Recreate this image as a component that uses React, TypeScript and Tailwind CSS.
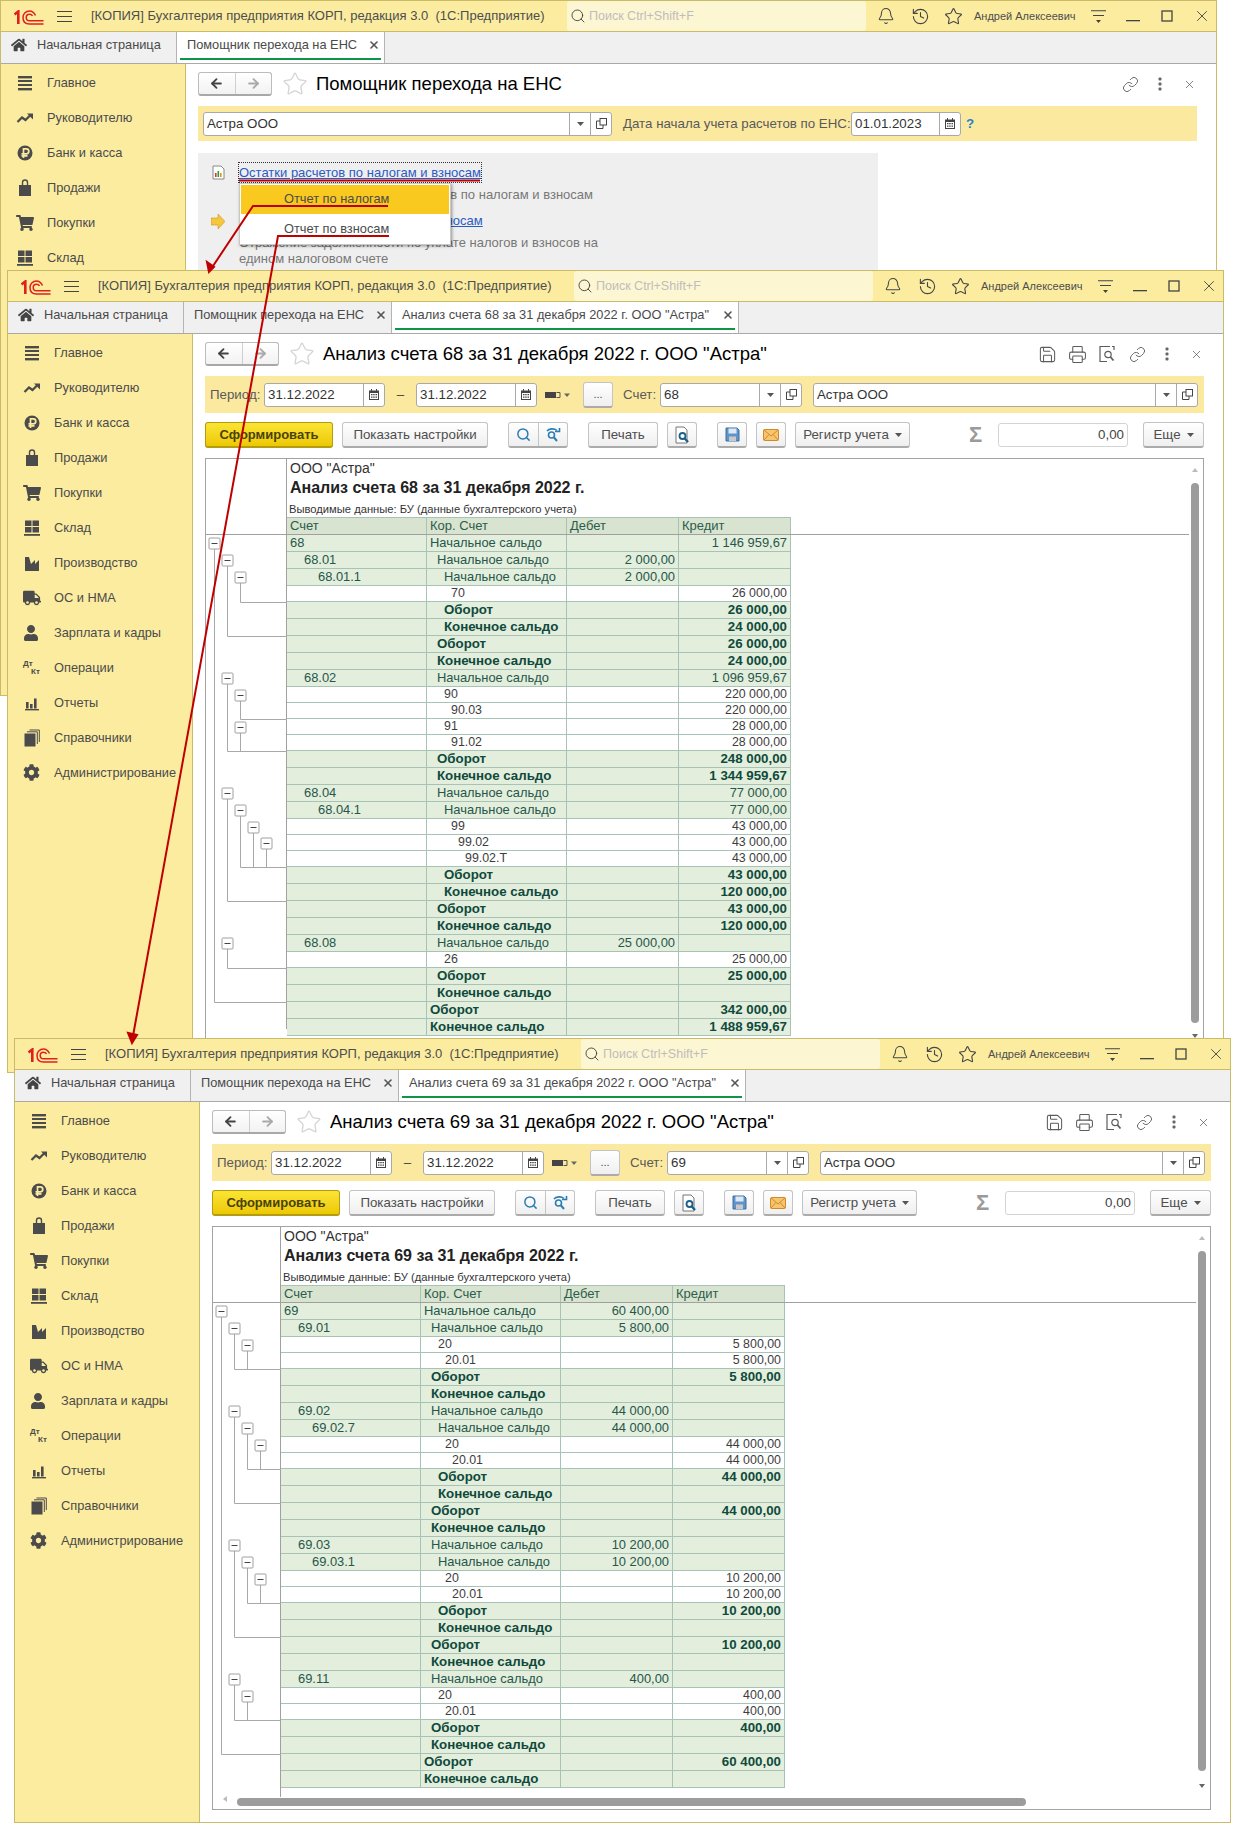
import React from 'react';
import { Bell, History, Star, Search, Link, Save, Printer, X, ArrowLeft, ArrowRight } from 'lucide-react';
import { FaHome, FaShoppingCart, FaTruck, FaUser, FaCog } from 'react-icons/fa';

const Logo = () => (
  <svg width="30" height="15" viewBox="0 0 30 15" fill="none" stroke="#e0201c">
    <path d="M0.5 4.5 L4.3 1.5 V14" strokeWidth="2.6" />
    <path d="M21.5 5.5C20 2.5 18 1 15.5 1C11.5 1 9 4 9 7.5C9 11.5 11.5 14 15.5 14H29.5" strokeWidth="1.5" />
    <path d="M18.5 6C18 5 17 4.2 15.5 4.2C13.5 4.2 12.2 5.6 12.2 7.5C12.2 9.4 13.5 10.8 15.5 10.8H29.5" strokeWidth="1.5" />
  </svg>
);

const Ic = ({ children }: { children: React.ReactNode }) => (
  <svg width="18" height="18" viewBox="0 0 18 18" fill="#4b4b4b">{children}</svg>
);

const navItems: [string, React.ReactNode][] = [
  ['Главное', <Ic><rect x="2" y="2" width="14" height="2.4" /><rect x="2" y="6" width="14" height="2" /><rect x="2" y="10" width="14" height="2" /><rect x="2" y="14" width="14" height="2.4" /></Ic>],
  ['Руководителю', <Ic><path d="M1.5 13 L6 8.5 L9.5 11 L14 6.5" fill="none" stroke="#4b4b4b" strokeWidth="2.2" /><path d="M11 4.5 H17 V10.5 Z" /></Ic>],
  ['Банк и касса', <Ic><circle cx="9" cy="9" r="7.5" /><path d="M7.5 14V4.8h2.8a2.5 2.5 0 0 1 0 5H5.5 M5.5 11.8h6" fill="none" stroke="#fbeca0" strokeWidth="1.7" /></Ic>],
  ['Продажи', <Ic><path d="M3 6 H15 V17 H3 Z" /><path d="M6.5 8 V3.5 A2.5 2.5 0 0 1 11.5 3.5 V8" fill="none" stroke="#4b4b4b" strokeWidth="1.4" /></Ic>],
  ['Покупки', <FaShoppingCart size={18} color="#4b4b4b" />],
  ['Склад', <Ic><rect x="2" y="1.5" width="6.5" height="5.5" /><rect x="9.5" y="1.5" width="6.5" height="5.5" /><rect x="2" y="8" width="6.5" height="5.5" /><rect x="9.5" y="8" width="6.5" height="5.5" /><rect x="1" y="15" width="16" height="1.8" /></Ic>],
  ['Производство', <Ic><path d="M2 17V3h4l2 7 4-4v4l4-4v11z" /></Ic>],
  ['ОС и НМА', <FaTruck size={18} color="#4b4b4b" />],
  ['Зарплата и кадры', <FaUser size={16} color="#4b4b4b" />],
  ['Операции', <span className="flex flex-col text-[8px] leading-[8px] font-bold text-[#4b4b4b]"><span>Дт</span><span className="pl-[8px]">Кт</span></span>],
  ['Отчеты', <Ic><rect x="3" y="8" width="2.6" height="6.5" /><rect x="7" y="10" width="2.6" height="4.5" /><rect x="11" y="4.5" width="2.6" height="10" /><rect x="2" y="15" width="14" height="1.4" /></Ic>],
  ['Справочники', <Ic><rect x="1.5" y="4.5" width="11" height="13" /><path d="M4 2.8 H14.3 V15 M6.5 1 H16.3 V13" fill="none" stroke="#4b4b4b" strokeWidth="1" /></Ic>],
  ['Администрирование', <FaCog size={17} color="#4b4b4b" />],
];

type Tab = { label: string; w: string; close?: boolean; active?: boolean; home?: boolean };

const SmallX = () => <X size={12} strokeWidth={3.2} color="#555" />;

function TabItem({ t }: { t: Tab }) {
  return (
    <div className={`${t.w} h-full flex flex-col border-r border-[#b4b4b4] ${t.active ? 'bg-white' : ''}`}>
      <div className={`flex-1 flex items-center ${t.home ? 'pl-[10px]' : 'pl-[10px] pr-[4px]'} text-[12.8px] text-[#4a4a4a] whitespace-nowrap overflow-hidden`}>
        {t.home && <FaHome size={16} color="#444" className="mr-[10px]" />}
        <span className="flex-1">{t.label}</span>
        {t.close && <span className="ml-[2px]"><SmallX /></span>}
      </div>
      <div className={`h-[2px] mx-[3px] mb-[3px] ${t.active ? 'bg-[#0d9448]' : ''}`} />
    </div>
  );
}

function Shell({ pos, tabs, overlay, nav = 13, children }: { pos: string; tabs: Tab[]; overlay?: React.ReactNode; nav?: number; children: React.ReactNode }) {
  return (
    <div className={`absolute ${pos} bg-white border border-[#cabb68] flex flex-col overflow-hidden`}>
      <div className="h-[31px] shrink-0 bg-[#fbeca0] border-b border-[#cabb68] flex items-center">
        <span className="ml-[13px] w-[30px] mt-[2px] flex"><Logo /></span>
        <svg className="ml-[13px]" width="15" height="13" viewBox="0 0 15 13" stroke="#444" strokeWidth="1.2"><path d="M0 1.5H15M0 6.5H15M0 11.5H15" /></svg>
        <span className="ml-[19px] w-[476px] text-[13px] text-[#4e4e4e] whitespace-pre">{'[КОПИЯ] Бухгалтерия предприятия КОРП, редакция 3.0  (1С:Предприятие)'}</span>
        <div className="w-[299px] h-[30px] bg-[#fdf6d2] rounded-[3px] flex items-center pl-[3px] text-[12.5px] text-[#bdbdbd]">
          <Search size={16} color="#444" strokeWidth={1.4} className="mr-[3px]" />
          <span>Поиск Ctrl+Shift+F</span>
        </div>
        <Bell className="ml-[11px]" size={18} color="#444" strokeWidth={1.4} />
        <History className="ml-[16px]" size={19} color="#444" strokeWidth={1.4} />
        <Star className="ml-[14px]" size={19} color="#444" strokeWidth={1.4} />
        <span className="ml-[11px] w-[117px] text-[11px] text-[#4e4e4e] whitespace-nowrap">Андрей Алексеевич</span>
        <svg width="15" height="15" viewBox="0 0 15 15" fill="#444"><path d="M0 1.2H15V2.2H0zM2 6H13V7H2zM5 11H10L7.5 14z" /></svg>
        <svg className="ml-[20px]" width="14" height="14" viewBox="0 0 14 14" fill="#444"><rect y="11" width="14" height="1.3" /></svg>
        <svg className="ml-[20px]" width="14" height="14" viewBox="0 0 14 14" fill="none" stroke="#444" strokeWidth="1.3"><rect x="2" y="2" width="10" height="10" /></svg>
        <X className="ml-[19px]" size={18} color="#444" strokeWidth={1.2} />
      </div>
      <div className="h-[32px] shrink-0 bg-[#f0f0f0] border-b border-[#a9a9a9] flex">
        {tabs.map((t) => <TabItem key={t.label} t={t} />)}
      </div>
      <div className="flex-1 flex min-h-0">
        <div className="w-[185px] shrink-0 bg-[#fbeca0] border-r border-[#cabb68] pt-[1px]">
          {navItems.slice(0, nav).map(([label, icon]) => (
            <div key={label} className="h-[35px] flex items-center text-[12.8px] text-[#4b4b4b]">
              <span className="w-[46px] pl-[15px] flex items-center">{icon}</span>
              <span>{label}</span>
            </div>
          ))}
        </div>
        <div className="flex-1 flex flex-col pl-[12px] pr-[19px] pt-[8px] min-w-0">{children}</div>
      </div>
      {overlay}
    </div>
  );
}

function TitleRow({ title, full }: { title: string; full?: boolean }) {
  return (
    <div className="h-[24px] shrink-0 flex items-center">
      <div className="w-[74px] h-[24px] flex border border-[#bcbcbc] border-b-2 border-b-[#a8a8a8] rounded-[3px] bg-gradient-to-b from-white to-[#f2f2f2]">
        <div className="flex-1 flex items-center justify-center border-r border-[#cfcfcf]"><ArrowLeft size={15} strokeWidth={3} color="#444" /></div>
        <div className="flex-1 flex items-center justify-center"><ArrowRight size={15} strokeWidth={3} color="#a9a9a9" /></div>
      </div>
      <Star className="ml-[10px]" size={26} color="#d4d4d4" strokeWidth={1.2} />
      <span className="ml-[8px] text-[18.5px] text-black whitespace-nowrap">{title}</span>
      <div className="ml-auto flex items-center text-[#5c5c5c]">
        {full && (
          <>
            <span className="w-[30px] flex justify-center"><Save size={19} strokeWidth={1.3} /></span>
            <span className="w-[30px] flex justify-center"><Printer size={19} strokeWidth={1.3} /></span>
            <span className="w-[30px] flex justify-center">
              <svg width="18" height="18" viewBox="0 0 18 18" fill="none" stroke="#5c5c5c" strokeWidth="1.2"><path d="M12 1.5H2V16.5H9" /><path d="M14 1.5H16V5" /><circle cx="10" cy="9.5" r="3.2" /><path d="M12.5 12 L15.5 15.5" strokeWidth="1.8" /></svg>
            </span>
          </>
        )}
        <span className="w-[30px] flex justify-center"><Link size={17} strokeWidth={1.3} /></span>
        <span className="w-[30px] flex justify-center">
          <svg width="4" height="14" viewBox="0 0 4 14" fill="#666"><rect x="0.5" y="0.5" width="3" height="3" rx="1" /><rect x="0.5" y="5.5" width="3" height="3" rx="1" /><rect x="0.5" y="10.5" width="3" height="3" rx="1" /></svg>
        </span>
        <span className="w-[16px] ml-[6px] flex justify-center"><X size={13} strokeWidth={1.4} /></span>
      </div>
    </div>
  );
}

const Caret = () => <svg width="7" height="4" viewBox="0 0 7 4" fill="#555"><path d="M0 0H7L3.5 4z" /></svg>;
const CopyIcon = () => (
  <svg width="11" height="11" viewBox="0 0 11 11" fill="none" stroke="#444" strokeWidth="1"><rect x="4" y="0.5" width="6.5" height="6.5" /><path d="M4 3H0.5V10.5H7V7" /></svg>
);
const Cal = () => (
  <svg width="10" height="11" viewBox="0 0 10 11" fill="#444"><path d="M0 1.5H2V0H3V1.5H7V0H8V1.5H10V11H0ZM1 4V10H9V4Z" /><path d="M2 5h1.5v1.2H2zM4.2 5h1.5v1.2H4.2zM6.5 5H8v1.2H6.5zM2 7.5h1.5v1.2H2zM4.2 7.5h1.5v1.2H4.2zM6.5 7.5H8v1.2H6.5z" /></svg>
);

function Field({ w, text, kind }: { w: string; text: string; kind: 'date' | 'select' }) {
  return (
    <div className={`${w} h-[24px] shrink-0 bg-white border border-[#a9a9a9] rounded-[3px] flex items-center text-[13.3px] text-[#333]`}>
      <span className="flex-1 pl-[3px] whitespace-nowrap overflow-hidden">{text}</span>
      {kind === 'date' ? (
        <span className="w-[21px] h-full border-l border-[#a9a9a9] flex items-center justify-center"><Cal /></span>
      ) : (
        <>
          <span className="w-[21px] h-full border-l border-[#a9a9a9] flex items-center justify-center"><Caret /></span>
          <span className="w-[21px] h-full border-l border-[#a9a9a9] flex items-center justify-center"><CopyIcon /></span>
        </>
      )}
    </div>
  );
}

function Btn({ w, children, extra = '' }: { w: string; children: React.ReactNode; extra?: string }) {
  return (
    <div className={`${w} ${extra} h-[26px] shrink-0 border border-[#c4c4c4] border-b-2 border-b-[#ababab] rounded-[3px] bg-gradient-to-b from-white to-[#efefef] flex items-center justify-center text-[13.3px] text-[#4e4e4e] whitespace-nowrap`}>
      {children}
    </div>
  );
}

type Row = { k: 'g' | 'w' | 'b'; acc?: string; al?: number; kor: string; kl: number; deb?: string; cred?: string };
const g = (acc: string, al: number, deb: string, cred: string, kl = al): Row => ({ k: 'g', acc, al, kor: 'Начальное сальдо', kl, deb, cred });
const w = (kor: string, kl: number, cred: string): Row => ({ k: 'w', kor, kl, cred });
const ob = (kl: number, cred: string): Row => ({ k: 'b', kor: 'Оборот', kl, cred });
const ko = (kl: number, cred: string): Row => ({ k: 'b', kor: 'Конечное сальдо', kl, cred });

const rows68: Row[] = [
  g('68', 0, '', '1 146 959,67'),
  g('68.01', 1, '2 000,00', ''),
  g('68.01.1', 2, '2 000,00', ''),
  w('70', 3, '26 000,00'),
  ob(2, '26 000,00'), ko(2, '24 000,00'), ob(1, '26 000,00'), ko(1, '24 000,00'),
  g('68.02', 1, '', '1 096 959,67'),
  w('90', 2, '220 000,00'), w('90.03', 3, '220 000,00'), w('91', 2, '28 000,00'), w('91.02', 3, '28 000,00'),
  ob(1, '248 000,00'), ko(1, '1 344 959,67'),
  g('68.04', 1, '', '77 000,00'),
  g('68.04.1', 2, '', '77 000,00'),
  w('99', 3, '43 000,00'), w('99.02', 4, '43 000,00'), w('99.02.Т', 5, '43 000,00'),
  ob(2, '43 000,00'), ko(2, '120 000,00'), ob(1, '43 000,00'), ko(1, '120 000,00'),
  g('68.08', 1, '25 000,00', ''),
  w('26', 2, '25 000,00'),
  ob(1, '25 000,00'), ko(1, ''), ob(0, '342 000,00'), ko(0, '1 488 959,67'),
];
const tree68: [number, number, number][] = [[0, 0, 27], [1, 1, 5], [2, 2, 3], [1, 8, 12], [2, 9, 10], [2, 11, 12], [1, 15, 21], [2, 16, 19], [3, 17, 19], [4, 18, 19], [1, 24, 25]];

const rows69: Row[] = [
  g('69', 0, '60 400,00', ''),
  g('69.01', 1, '5 800,00', ''),
  w('20', 2, '5 800,00'), w('20.01', 3, '5 800,00'),
  ob(1, '5 800,00'), ko(1, ''),
  g('69.02', 1, '44 000,00', ''),
  g('69.02.7', 2, '44 000,00', ''),
  w('20', 3, '44 000,00'), w('20.01', 4, '44 000,00'),
  ob(2, '44 000,00'), ko(2, ''), ob(1, '44 000,00'), ko(1, ''),
  g('69.03', 1, '10 200,00', ''),
  g('69.03.1', 2, '10 200,00', ''),
  w('20', 3, '10 200,00'), w('20.01', 4, '10 200,00'),
  ob(2, '10 200,00'), ko(2, ''), ob(1, '10 200,00'), ko(1, ''),
  g('69.11', 1, '400,00', ''),
  w('20', 2, '400,00'), w('20.01', 3, '400,00'),
  ob(1, '400,00'), ko(1, ''), ob(0, '60 400,00'), ko(0, ''),
];
const tree69: [number, number, number][] = [[0, 0, 26], [1, 1, 3], [2, 2, 3], [1, 6, 11], [2, 7, 9], [3, 8, 9], [1, 14, 19], [2, 15, 17], [3, 16, 17], [1, 22, 24], [2, 23, 24]];

const accPad = ['pl-[3px]', 'pl-[17px]', 'pl-[31px]'];
const korPad = ['pl-[3px]', 'pl-[10px]', 'pl-[17px]', 'pl-[24px]', 'pl-[31px]', 'pl-[38px]'];
const COLS = 'grid grid-cols-[140px_140px_112px_112px] w-[504px]';

function TableRow({ r }: { r: Row }) {
  const h = r.k === 'w' ? 'h-[16px] bg-white text-[#3d3d3d] text-[12.4px] leading-[15px]' : r.k === 'g' ? 'h-[17px] bg-[#e3eedd] text-[#26574a] text-[12.9px] leading-[16px]' : 'h-[17px] bg-[#e3eedd] text-[#0f4a3c] font-bold text-[13.3px] leading-[16px]';
  const cell = 'border-r border-b border-[#a6c3b6] whitespace-nowrap overflow-hidden';
  return (
    <div className={`${COLS} ${h}`}>
      <div className={`${cell} ${accPad[r.al ?? 0]}`}>{r.acc}</div>
      <div className={`${cell} ${korPad[r.kl]}`}>{r.kor}</div>
      <div className={`${cell} text-right pr-[3px]`}>{r.deb}</div>
      <div className={`${cell} text-right pr-[3px]`}>{r.cred}</div>
    </div>
  );
}

function Tree({ rows, spec, gw }: { rows: Row[]; spec: [number, number, number][]; gw: number }) {
  const tops: number[] = [];
  let y = 77;
  rows.forEach((r) => { tops.push(y); y += r.k === 'w' ? 16 : 17; });
  tops.push(y);
  return (
    <svg className="absolute left-0 top-0" width={gw} height={570}>
      <path d={`M0 75.5H${gw}`} stroke="#a0a0a0" strokeWidth="1" />
      {spec.map(([lv, a, b], i) => {
        const x = 8.5 + lv * 13;
        const yc = tops[a] + 7.5;
        const ye = tops[b + 1] - 0.5;
        return (
          <g key={i}>
            <path d={`M${x} ${yc}V${ye}H${gw}`} fill="none" stroke="#a8a8a8" strokeWidth="1" />
            <rect x={x - 5.5} y={yc - 5.5} width="11" height="11" rx="1" fill="#fff" stroke="#a0a0a0" />
            <path d={`M${x - 3} ${yc}H${x + 3}`} stroke="#444" strokeWidth="1" />
          </g>
        );
      })}
    </svg>
  );
}

function Report({ acc, rows, tree, gutter, gw, vEnd, vArrow, hbar }: { acc: string; rows: Row[]; tree: [number, number, number][]; gutter: string; gw: number; vEnd: string; vArrow: string; hbar?: boolean }) {
  return (
    <div className="relative mt-[10px] h-[584px] shrink-0 border border-[#a3a3a3] flex overflow-hidden bg-white">
      <div className={`relative ${gutter} h-[570px] shrink-0 border-r border-[#a0a0a0]`}>
        <Tree rows={rows} spec={tree} gw={gw} />
      </div>
      <div className="flex-1 min-w-0 font-normal">
        <div className="h-[58px] pl-[3px] text-[#333]">
          <div className="text-[14px] leading-[16px] pt-[1px]">ООО "Астра"</div>
          <div className="text-[16px] leading-[20px] font-bold text-[#222] mt-[2px]">{`Анализ счета ${acc} за 31 декабря 2022 г.`}</div>
          <div className="text-[11.2px] leading-[14px] mt-[4px] -ml-[1px]">Выводимые данные: БУ (данные бухгалтерского учета)</div>
        </div>
        <div className="mr-[14px] border-b border-[#a0a0a0] h-[18px]">
          <div className={`${COLS} h-[17px] bg-[#d8e4d0] text-[13px] leading-[16px] text-[#2d5c4c] border-t border-[#a6c3b6]`}>
            {['Счет', 'Кор. Счет', 'Дебет', 'Кредит'].map((t) => (
              <div key={t} className="border-r border-[#a6c3b6] pl-[3px]">{t}</div>
            ))}
          </div>
        </div>
        {rows.map((r, i) => <TableRow key={i} r={r} />)}
      </div>
      <div className={`absolute right-[4px] top-[24px] ${vEnd} w-[8px] rounded-full bg-[#9c9c9c]`} />
      <svg className="absolute right-[5px] top-[9px]" width="6" height="4" viewBox="0 0 6 4" fill="#bbb"><path d="M3 0L6 4H0z" /></svg>
      <svg className={`absolute right-[5px] ${vArrow}`} width="6" height="4" viewBox="0 0 6 4" fill="#666"><path d="M0 0H6L3 4z" /></svg>
      {hbar && (
        <>
          <svg className="absolute left-[10px] bottom-[7px]" width="4" height="6" viewBox="0 0 4 6" fill="#bbb"><path d="M0 3L4 0V6z" /></svg>
          <div className="absolute left-[24px] bottom-[3px] w-[789px] h-[8px] rounded-full bg-[#9c9c9c]" />
        </>
      )}
    </div>
  );
}

function AnalysisBody({ acc, rows, tree, gutter, gw, vEnd, vArrow, hbar }: { acc: string; rows: Row[]; tree: [number, number, number][]; gutter: string; gw: number; vEnd: string; vArrow: string; hbar?: boolean }) {
  return (
    <>
      <TitleRow full title={`Анализ счета ${acc} за 31 декабря 2022 г. ООО "Астра"`} />
      <div className="mt-[10px] h-[37px] shrink-0 bg-[#fbe9a0] flex items-center text-[13.3px] text-[#5a5a5a]">
        <span className="ml-[5px] w-[54px]">Период:</span>
        <Field w="w-[121px]" text="31.12.2022" kind="date" />
        <span className="w-[31px] text-center text-[#444]">–</span>
        <Field w="w-[121px]" text="31.12.2022" kind="date" />
        <span className="w-[46px] flex items-center pl-[8px]">
          <svg width="26" height="8" viewBox="0 0 26 8"><rect x="0" y="1" width="11" height="6" fill="#444" /><path d="M11.5 1.5H15V6.5H11.5" fill="none" stroke="#555" /><path d="M19 2.5H25L22 6z" fill="#666" /></svg>
        </span>
        <Btn w="w-[30px]"><span className="text-[11px]">...</span></Btn>
        <span className="ml-[10px] w-[37px]">Счет:</span>
        <Field w="w-[142px]" text={acc} kind="select" />
        <span className="w-[11px]" />
        <Field w="w-[385px]" text="Астра ООО" kind="select" />
      </div>
      <div className="mt-[9px] h-[26px] shrink-0 flex items-center">
        <div className="w-[128px] h-[26px] shrink-0 rounded-[3px] border border-[#b49c12] border-b-2 bg-gradient-to-b from-[#fbe532] to-[#edc800] flex items-center justify-center text-[13px] font-bold text-[#4a4208]">Сформировать</div>
        <Btn w="w-[146px]" extra="ml-[9px]">Показать настройки</Btn>
        <div className="ml-[20px] w-[60px] h-[26px] shrink-0 flex border border-[#c4c4c4] border-b-2 border-b-[#ababab] rounded-[3px] bg-gradient-to-b from-white to-[#efefef]">
          <span className="flex-1 flex items-center justify-center border-r border-[#c4c4c4]"><Search size={15} color="#2a7db5" strokeWidth={2.4} /></span>
          <span className="flex-1 flex items-center justify-center">
            <svg width="16" height="16" viewBox="0 0 16 16" fill="none" stroke="#2a7db5" strokeWidth="1.6"><circle cx="6.5" cy="8" r="3" /><path d="M9 10.5L12 14" strokeWidth="2" /><path d="M2 4C4 1.5 9 1 12 3.5" /><path d="M10 4.5H14.5V1" /></svg>
          </span>
        </div>
        <Btn w="w-[70px]" extra="ml-[20px]">Печать</Btn>
        <Btn w="w-[30px]" extra="ml-[9px]">
          <svg width="16" height="18" viewBox="0 0 16 18" fill="none"><path d="M10 1H2V17H13V4Z" stroke="#777" fill="#fff" /><circle cx="8.5" cy="10" r="3" stroke="#1c5f8c" strokeWidth="1.8" /><path d="M10.5 12.2L14 16" stroke="#1c5f8c" strokeWidth="2.4" /></svg>
        </Btn>
        <Btn w="w-[30px]" extra="ml-[20px]">
          <svg width="15" height="15" viewBox="0 0 15 15"><path d="M1 1H12L14 3V14H1Z" fill="#5f93cc" stroke="#3f6f9f" /><rect x="3.5" y="1.5" width="8" height="5" fill="#dfe9f3" /><rect x="4" y="9.5" width="7" height="4.5" fill="#c9c9c9" /></svg>
        </Btn>
        <Btn w="w-[30px]" extra="ml-[9px]">
          <svg width="16" height="12" viewBox="0 0 16 12"><rect x="0.5" y="0.5" width="15" height="11" rx="1" fill="#f6c56e" stroke="#d08a2a" /><path d="M1 1L8 7L15 1M1 11L6 5.5M15 11L10 5.5" fill="none" stroke="#d08a2a" /></svg>
        </Btn>
        <Btn w="w-[115px]" extra="ml-[9px]"><span className="mr-[6px]">Регистр учета</span><Caret /></Btn>
        <span className="ml-[59px] w-[29px] text-[22px] leading-[26px] font-bold text-[#9a9a9a]">Σ</span>
        <div className="w-[130px] h-[24px] shrink-0 border border-[#d4d4d4] rounded-[3px] bg-white text-right pr-[3px] text-[13.3px] leading-[22px] text-[#444]">0,00</div>
        <Btn w="w-[61px]" extra="ml-[15px]"><span className="mr-[6px]">Еще</span><Caret /></Btn>
      </div>
      <Report acc={acc} rows={rows} tree={tree} gutter={gutter} gw={gw} vEnd={vEnd} vArrow={vArrow} hbar={hbar} />
    </>
  );
}

const H = 'Начальная страница';
const P = 'Помощник перехода на ЕНС';

export default function App() {
  return (
    <div className="relative w-[1233px] h-[1826px] bg-white overflow-hidden font-['Liberation_Sans',Arial,sans-serif]">
      <Shell
        pos="left-0 top-0 w-[1217px] h-[696px]"
        nav={6}
        tabs={[{ label: H, w: 'w-[176px]', home: true }, { label: P, w: 'w-[208px]', close: true, active: true }]}
        overlay={
          <div className="absolute left-[238px] top-[182px] w-[212px] h-[62px] bg-white border border-[#c8c8c8] shadow-[1px_1px_3px_rgba(0,0,0,0.4)] p-[1px] text-[12.8px] text-[#4b4b4b]">
            <div className="h-[29px] bg-[#f9c91f] pl-[43px] leading-[28px]">Отчет по налогам</div>
            <div className="h-[30px] pl-[43px] leading-[30px]">Отчет по взносам</div>
          </div>
        }
      >
        <TitleRow title={P} />
        <div className="mt-[10px] h-[35px] shrink-0 bg-[#fbe9a0] flex items-center text-[13.3px] text-[#5a5a5a]">
          <span className="ml-[5px]" />
          <Field w="w-[409px]" text="Астра ООО" kind="select" />
          <span className="ml-[11px] w-[228px] whitespace-nowrap">Дата начала учета расчетов по ЕНС:</span>
          <Field w="w-[110px]" text="01.01.2023" kind="date" />
          <span className="ml-[5px] text-[#1f85c8] font-bold">?</span>
        </div>
        <div className="mt-[12px] w-[680px] flex-1 bg-[#efefef] text-[13px] text-[#777]">
          <div className="mt-[11px] h-[17px] flex items-center pl-[14px]">
            <svg className="mr-[14px]" width="13" height="15" viewBox="0 0 13 15"><path d="M1 1H9L12 4V14H1Z" fill="#fff" stroke="#888" /><rect x="3" y="8" width="1.6" height="4" fill="#d33" /><rect x="5.5" y="6" width="1.6" height="6" fill="#2a9a3c" /><rect x="8" y="8" width="1.6" height="4" fill="#c9a016" /></svg>
            <span className="text-[#2a5bc4] underline outline-1 outline-dotted outline-[#333] whitespace-nowrap">Остатки расчетов по налогам и взносам</span>
          </div>
          <div className="mt-[6px] pl-[41px] h-[16px] leading-[16px] whitespace-nowrap">Анализ и сверка входящих остатков по налогам и взносам</div>
          <div className="mt-[10px] h-[16px] flex items-center pl-[13px]">
            <svg className="mr-[14px]" width="14" height="15" viewBox="0 0 14 15"><path d="M0 4H7V0L14 7.5L7 15V11H0Z" fill="#f5c73a" stroke="#c9962a" strokeWidth="0.6" /></svg>
            <span className="text-[#2a5bc4] underline whitespace-nowrap">Перенос остатков по налогам и взносам</span>
          </div>
          <div className="mt-[6px] pl-[41px] w-[410px] leading-[16px]">Отражение задолженности по уплате налогов и взносов на едином налоговом счете</div>
        </div>
      </Shell>

      <Shell
        pos="left-[7px] top-[270px] w-[1217px] h-[803px]"
        tabs={[{ label: H, w: 'w-[176px]', home: true }, { label: P, w: 'w-[208px]', close: true }, { label: 'Анализ счета 68 за 31 декабря 2022 г. ООО "Астра"', w: 'w-[347px]', close: true, active: true }]}
      >
        <AnalysisBody acc="68" rows={rows68} tree={tree68} gutter="w-[81px]" gw={81} vEnd="h-[540px]" vArrow="top-[575px]" />
      </Shell>

      <Shell
        pos="left-[14px] top-[1038px] w-[1217px] h-[785px]"
        tabs={[{ label: H, w: 'w-[176px]', home: true }, { label: P, w: 'w-[208px]', close: true }, { label: 'Анализ счета 69 за 31 декабря 2022 г. ООО "Астра"', w: 'w-[347px]', close: true, active: true }]}
      >
        <AnalysisBody acc="69" rows={rows69} tree={tree69} gutter="w-[68px]" gw={68} vEnd="h-[520px]" vArrow="top-[557px]" hbar />
      </Shell>

      <svg className="absolute left-0 top-0 pointer-events-none" width="1233" height="1826" fill="none" stroke="#c00000" strokeWidth="2">
        <path d="M239 180.5H480" />
        <path d="M388 206H253L211 269" />
        <path d="M389 236H278L133 1036" />
        <path d="M209 272L207 262L214 267Z" fill="#c00000" />
        <path d="M132 1043L128 1033L137 1035Z" fill="#c00000" />
      </svg>
    </div>
  );
}
